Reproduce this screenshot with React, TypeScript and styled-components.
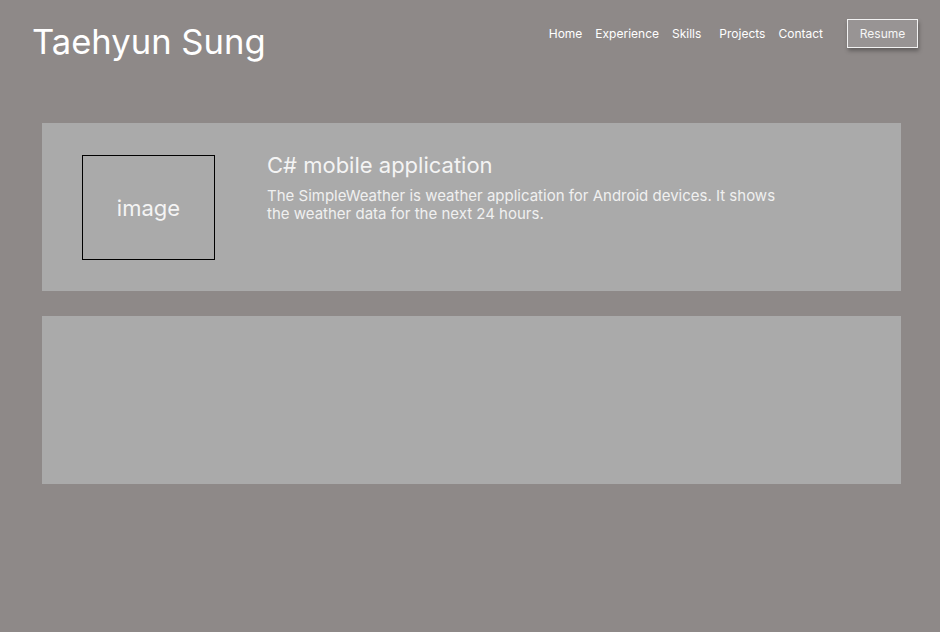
import React from "react";
import styled, { createGlobalStyle } from "styled-components";

const Global = createGlobalStyle`
  html, body { margin: 0; padding: 0; background: #8e8988; }
  body { font-family: Inter, "Noto Sans", sans-serif; }
  * { box-sizing: border-box; }
`;

const Page = styled.div`
  min-height: 632px;
  background: #8e8988;
  display: flex;
  flex-direction: column;
`;

const Header = styled.header`
  display: flex;
  align-items: flex-start;
  justify-content: space-between;
  padding: 19px 22px 0 32px;
  height: 123px;
`;

const Name = styled.h1`
  margin: 0;
  font-size: 34.6px;
  font-weight: 400;
  line-height: 44px;
  color: #ffffff;
`;

const Nav = styled.nav`
  display: flex;
  align-items: center;
  height: 29px;
`;

const NavLink = styled.a<{ $extra?: number }>`
  font-size: 12px;
  color: #ffffff;
  text-decoration: none;
  margin-right: ${(p) => 13 + (p.$extra ?? 0)}px;
`;

const ResumeButton = styled.button`
  margin-left: 11px;
  width: 71px;
  height: 29px;
  border: 1px solid #f2f2f2;
  background: #989494;
  color: #f6f6f6;
  font-family: Inter, sans-serif;
  font-size: 12px;
  padding: 0;
  box-shadow: 1px 3px 4px rgba(0, 0, 0, 0.3);
`;

const Cards = styled.main`
  display: flex;
  flex-direction: column;
  gap: 25px;
  padding: 0 39px 0 42px;
`;

const Card = styled.section`
  height: 168px;
  background: #aaaaaa;
  display: flex;
  align-items: flex-start;
  padding: 32px 40px;
  gap: 52px;
`;

const ImageBox = styled.div`
  width: 133px;
  height: 105px;
  border: 1px solid #000;
  display: flex;
  align-items: center;
  justify-content: center;
  color: #f4f4f4;
  font-size: 22px;
  flex-shrink: 0;
`;

const Info = styled.div`
  display: flex;
  flex-direction: column;
  gap: 12px;
  max-width: 530px;
`;

const Title = styled.h2`
  margin: 0;
  font-size: 22px;
  font-weight: 400;
  line-height: 20px;
  color: #f4f4f4;
`;

const Desc = styled.p`
  margin: 0;
  font-size: 15px;
  line-height: 18px;
  color: #f0f0f0;
`;

export default function App() {
  return (
    <Page>
      <Global />
      <Header>
        <Name>Taehyun Sung</Name>
        <Nav>
          <NavLink href="#">Home</NavLink>
          <NavLink href="#">Experience</NavLink>
          <NavLink href="#" $extra={5}>Skills</NavLink>
          <NavLink href="#">Projects</NavLink>
          <NavLink href="#">Contact</NavLink>
          <ResumeButton>Resume</ResumeButton>
        </Nav>
      </Header>
      <Cards>
        <Card>
          <ImageBox>image</ImageBox>
          <Info>
            <Title>C# mobile application</Title>
            <Desc>
              The SimpleWeather is weather application for Android devices. It shows the weather data for the next 24 hours.
            </Desc>
          </Info>
        </Card>
        <Card />
      </Cards>
    </Page>
  );
}
